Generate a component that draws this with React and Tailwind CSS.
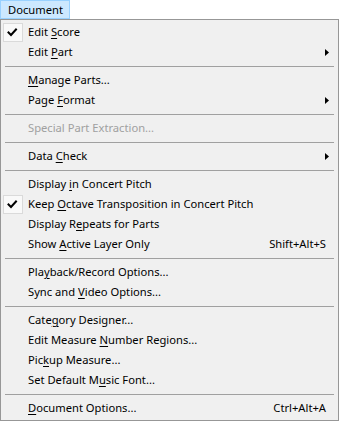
import React from "react";

const U = ({ children }) => <span className="underline underline-offset-[2px] decoration-[1px]">{children}</span>;

const Check = () => (
  <div className="absolute left-[2px] top-[1px] w-[20px] h-[19px] bg-[#f9f9f9] border border-[#dadada]">
    <svg width="18" height="17" viewBox="0 0 18 17" className="block">
      <path d="M4.5 8.5 L7 11 L12 5.5" fill="none" stroke="#000" strokeWidth="2" strokeLinecap="square" />
    </svg>
  </div>
);

const Arrow = () => (
  <svg width="4" height="7" viewBox="0 0 4 7" className="absolute right-[9px] top-[7px]">
    <path d="M0 0 L4 3.5 L0 7 Z" fill="#000" />
  </svg>
);

const Item = ({ children, checked, arrow, shortcut, disabled }) => (
  <div className={`relative h-[20px] flex items-center pl-[27px] pr-[12px] ${disabled ? "text-[#a0a0a0]" : "text-black"}`}>
    {checked && <Check />}
    <span className="flex-1 whitespace-nowrap">{children}</span>
    {shortcut && <span className="whitespace-nowrap">{shortcut}</span>}
    {arrow && <Arrow />}
  </div>
);

const Sep = () => (
  <div className="h-[8px] flex flex-col justify-center px-[4px]">
    <div className="h-[1px] bg-[#a0a0a0]" />
  </div>
);

export default function App() {
  return (
    <div
      className="w-[339px] h-[421px] bg-white text-[11.2px] leading-[16px]"
      style={{ fontFamily: '"Noto Sans", "Open Sans", sans-serif' }}
    >
      <div className="h-[19px] flex">
        <div className="w-[70px] h-[19px] bg-[#cce8ff] border border-[#99d1ff] flex items-center pl-[7px] text-black">
          Document
        </div>
      </div>
      <div className="w-[339px] h-[402px] border border-[#979797] bg-[#f0f0f0] py-[2px]">
        <Item checked>Edit <U>S</U>core</Item>
        <Item arrow>Edit <U>P</U>art</Item>
        <Sep />
        <Item><U>M</U>anage Parts...</Item>
        <Item arrow>Page <U>F</U>ormat</Item>
        <Sep />
        <Item disabled>Special Part Extraction...</Item>
        <Sep />
        <Item arrow>Data <U>C</U>heck</Item>
        <Sep />
        <Item>Display <U>i</U>n Concert Pitch</Item>
        <Item checked>Keep <U>O</U>ctave Transposition in Concert Pitch</Item>
        <Item>Display R<U>e</U>peats for Parts</Item>
        <Item shortcut="Shift+Alt+S">Show <U>A</U>ctive Layer Only</Item>
        <Sep />
        <Item>Pla<U>y</U>back/Record Options...</Item>
        <Item>Sync and <U>V</U>ideo Options...</Item>
        <Sep />
        <Item>Cate<U>g</U>ory Designer...</Item>
        <Item>Edit Measure <U>N</U>umber Regions...</Item>
        <Item>Pic<U>k</U>up Measure...</Item>
        <Item>Set Default M<U>u</U>sic Font...</Item>
        <Sep />
        <Item shortcut="Ctrl+Alt+A"><U>D</U>ocument Options...</Item>
      </div>
    </div>
  );
}
